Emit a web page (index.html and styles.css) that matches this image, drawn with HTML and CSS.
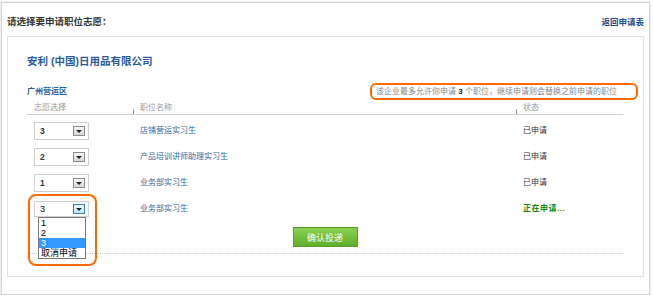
FILE: index.html
```html
<!DOCTYPE html>
<html lang="zh-CN">
<head>
    <meta charset="UTF-8">
    <title>选择申请职位志愿</title>
    <link rel="stylesheet" href="styles.css">
</head>
<body>
    <div class="page">
        <div class="page-head">
            <h2 class="page-title">请选择要申请职位志愿：</h2>
            <a class="back-link" href="#">返回申请表</a>
        </div>

        <div class="box">
            <h3 class="company">安利 (中国)日用品有限公司</h3>

            <div class="area-row">
                <span class="area">广州营运区</span>
                <p class="notice">该企业最多允许你申请 <b>3</b> 个职位，继续申请则会替换之前申请的职位</p>
            </div>

            <div class="job-table">
                <div class="job-head">
                    <span class="col">志愿选择</span>
                    <span class="col tick">职位名称</span>
                    <span class="col tick">状态</span>
                </div>

                <div class="job-row">
                    <div class="col"><div class="pick"><span class="pick-val">3</span><i class="pick-btn"></i></div></div>
                    <a class="col job-name" href="#">店铺营运实习生</a>
                    <span class="col state">已申请</span>
                </div>
                <div class="job-row">
                    <div class="col"><div class="pick"><span class="pick-val">2</span><i class="pick-btn"></i></div></div>
                    <a class="col job-name" href="#">产品培训讲师助理实习生</a>
                    <span class="col state">已申请</span>
                </div>
                <div class="job-row">
                    <div class="col"><div class="pick"><span class="pick-val">1</span><i class="pick-btn"></i></div></div>
                    <a class="col job-name" href="#">业务部实习生</a>
                    <span class="col state">已申请</span>
                </div>
                <div class="job-row">
                    <div class="col">
                        <div class="pick open">
                            <span class="pick-val">3</span><i class="pick-btn"></i>
                            <ul class="pick-list">
                                <li>1</li>
                                <li>2</li>
                                <li class="selected">3</li>
                                <li>取消申请</li>
                            </ul>
                            <span class="focus-ring"></span>
                        </div>
                    </div>
                    <a class="col job-name" href="#">业务部实习生</a>
                    <span class="col state pending">正在申请...</span>
                </div>
            </div>

            <div class="actions">
                <button class="submit-btn">确认投递</button>
            </div>
        </div>
    </div>
</body>
</html>
```

FILE: styles.css
```css
* {
    margin: 0;
    padding: 0;
    box-sizing: border-box;
}

body {
    padding: 2px 0 0 1px;
    background: #fff;
    font-family: "Liberation Sans", "Noto Sans CJK SC", sans-serif;
    color: #333;
}

.page {
    width: 649px;
    height: 293px;
    border: 1px solid #d4d4d4;
    box-shadow: 0 0 0 1px #efefef;
    padding: 0 5px;
}

.page-head {
    height: 33px;
    padding-top: 4px;
    display: flex;
    justify-content: space-between;
    align-items: center;
}

.page-title {
    font-size: 9.5px;
    font-weight: bold;
    color: #333;
    line-height: 12px;
}

.back-link {
    font-size: 8.5px;
    font-weight: bold;
    color: #1d4c8a;
    text-decoration: none;
    line-height: 12px;
}

.box {
    height: 241px;
    border: 1px solid #e3e3e3;
    padding: 0 20px 0 19px;
}

.company {
    margin-top: 18px;
    font-size: 10.5px;
    font-weight: bold;
    color: #2b5b9b;
    line-height: 13px;
}

.area-row {
    margin-top: 15px;
    height: 17px;
    display: flex;
    justify-content: space-between;
    align-items: center;
}

.area {
    font-size: 8px;
    font-weight: bold;
    color: #2b5b9b;
    line-height: 12px;
}

.notice {
    width: 268px;
    height: 17px;
    margin-right: -15px;
    border: 2px solid #ff6a00;
    border-radius: 6px;
    padding-left: 4px;
    font-size: 8px;
    line-height: 13px;
    color: #888;
    white-space: nowrap;
}

.notice b {
    color: #222;
}

.job-head,
.job-row {
    display: grid;
    grid-template-columns: 106px 383px 107px;
    align-items: center;
}

.job-head {
    margin-top: 2px;
    height: 13px;
    border-bottom: 1px solid #cdcdcd;
    font-size: 8px;
    line-height: 12px;
    color: #999;
    margin-bottom: 3px;
}

.col {
    padding-left: 7px;
    position: relative;
}

.job-head .tick::before {
    content: "";
    position: absolute;
    left: 0;
    bottom: 0;
    width: 1px;
    height: 5px;
    background: #999;
}

.job-row {
    height: 26px;
    font-size: 8px;
    line-height: 12px;
}

.job-name {
    color: #3867a5;
    text-decoration: none;
}

.state {
    color: #333;
}

.state.pending {
    color: #188a10;
    font-weight: bold;
    letter-spacing: 0.5px;
}

.pick {
    position: relative;
    width: 55px;
    height: 18px;
    border: 1px solid #cfcfcf;
    display: flex;
    align-items: center;
    justify-content: space-between;
    padding: 0 3px 0 5px;
    background: #fff;
}

.pick-val {
    font-size: 8.5px;
    font-weight: bold;
    color: #333;
}

.pick-btn {
    width: 12px;
    height: 10px;
    border: 1px solid #8c8c8c;
    background: linear-gradient(#f6f6f6, #d6d6d6);
    display: flex;
    align-items: center;
    justify-content: center;
}

.pick-btn::after {
    content: "";
    border-left: 3px solid transparent;
    border-right: 3px solid transparent;
    border-top: 3px solid #222;
}

.pick.open {
    height: 16px;
}

.pick.open .pick-val {
    font-weight: normal;
    color: #000;
    font-size: 9px;
}

.pick.open .pick-btn {
    border-color: #3c7fb1;
    background: linear-gradient(#eaf6ff, #c6e4fb);
}

.pick-list {
    position: absolute;
    top: 15px;
    left: 3px;
    width: 48px;
    list-style: none;
    border: 1px solid #7a7a7a;
    background: #fff;
    z-index: 2;
}

.pick-list li {
    height: 10px;
    line-height: 10px;
    padding-left: 2px;
    font-size: 9px;
    color: #000;
}

.pick-list li.selected {
    background: #3399ff;
    color: #fff;
}

.focus-ring {
    position: absolute;
    left: -7px;
    top: -8px;
    width: 69px;
    height: 72px;
    border: 2px solid #ff6a00;
    border-radius: 8px;
    z-index: 3;
}

.actions {
    margin-top: 5px;
    padding-bottom: 6px;
    border-bottom: 1px dotted #c8c8c8;
    display: flex;
    justify-content: center;
}

.submit-btn {
    width: 65px;
    height: 20px;
    border: 1px solid #5a9d2a;
    background: linear-gradient(#8ad150, #5fae2c);
    color: #fff;
    font-family: "Liberation Sans", "Noto Sans CJK SC", sans-serif;
    font-size: 9px;
    cursor: pointer;
}
```
